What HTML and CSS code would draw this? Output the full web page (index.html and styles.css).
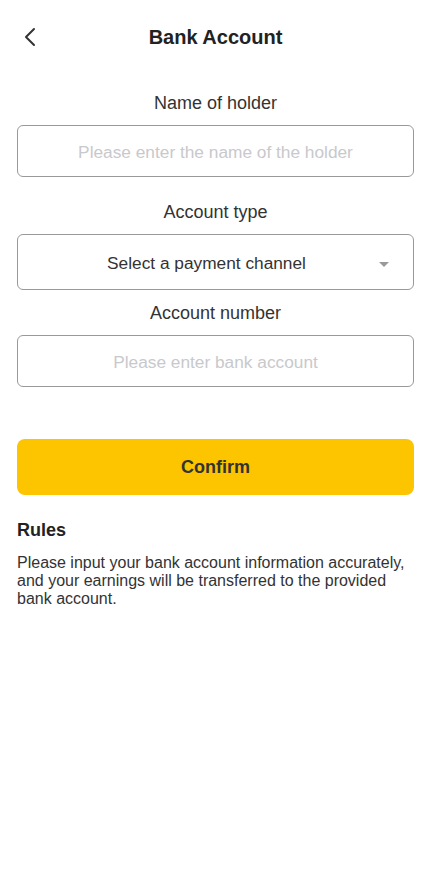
FILE: index.html
```html
<!DOCTYPE html>
<html lang="en">
<head>
<meta charset="utf-8">
<meta name="viewport" content="width=device-width, initial-scale=1">
<title>Bank Account</title>
<link rel="stylesheet" href="styles.css">
</head>
<body>
<div class="page">
  <header class="nav">
    <button class="back" aria-label="Back">
      <svg width="12" height="20" viewBox="0 0 12 20"><path d="M10 2 L2 10 L10 18" fill="none" stroke="#333" stroke-width="2" stroke-linecap="round" stroke-linejoin="round"/></svg>
    </button>
    <h1 class="title">Bank Account</h1>
  </header>

  <form class="form">
    <label class="label">Name of holder</label>
    <input class="field" type="text" placeholder="Please enter the name of the holder">

    <label class="label label-gap">Account type</label>
    <div class="field select">
      <span>Select a payment channel</span>
      <span class="caret"></span>
    </div>

    <label class="label label-tight">Account number</label>
    <input class="field" type="text" placeholder="Please enter bank account">

    <button type="button" class="confirm">Confirm</button>
  </form>

  <section class="rules">
    <h2 class="rules-title">Rules</h2>
    <p class="rules-text">Please input your bank account information accurately, and your earnings will be transferred to the provided bank account.</p>
  </section>
</div>
</body>
</html>
```

FILE: styles.css
```css
* { box-sizing: border-box; }
html, body { margin: 0; padding: 0; background: #fff; }
body {
  font-family: "Liberation Sans", Arial, sans-serif;
  color: #333;
}
.page { padding: 0 13px 0 17px; }
.nav {
  height: 74px;
  display: flex;
  align-items: center;
  justify-content: center;
  position: relative;
}
.back {
  position: absolute;
  left: 7px;
  top: 27px;
  background: none;
  border: 0;
  padding: 0;
  width: 12px;
  height: 20px;
  display: flex;
}
.title {
  margin: 0;
  font-size: 20px;
  font-weight: bold;
  color: #222;
}
.form { display: flex; flex-direction: column; }
.label {
  display: block;
  text-align: center;
  font-size: 18px;
  line-height: 24px;
  margin: 17px 0 10px;
  color: #333;
}
.label-gap { margin-top: 23px; margin-bottom: 10px; }
.label-tight { margin-top: 11px; margin-bottom: 10px; }
.field {
  width: 100%;
  height: 52px;
  border: 1px solid #999;
  border-radius: 6px;
  font-family: inherit;
  font-size: 17.3px;
  text-align: center;
  color: #333;
  background: #fff;
  outline: none;
  padding: 3px 8px 0;
}
.field::placeholder { color: #c8c9cc; }
.select {
  height: 56px;
  display: flex;
  align-items: center;
  justify-content: center;
  position: relative;
  padding: 3px 26px 0 8px;
}
.caret {
  position: absolute;
  right: 24px;
  top: 27px;
  width: 0;
  height: 0;
  border-left: 5px solid transparent;
  border-right: 5px solid transparent;
  border-top: 5px solid #999;
}
.confirm {
  margin-top: 52px;
  height: 56px;
  border: 0;
  border-radius: 8px;
  background: #fdc400;
  font-family: inherit;
  font-size: 18px;
  font-weight: bold;
  color: #333;
  padding-top: 2px;
}
.rules { margin-top: 23px; }
.rules-title {
  margin: 0;
  font-size: 18px;
  line-height: 24px;
  font-weight: bold;
  color: #222;
}
.rules-text {
  margin: 12px 0 0;
  font-size: 16px;
  line-height: 18px;
  color: #333;
}
```
